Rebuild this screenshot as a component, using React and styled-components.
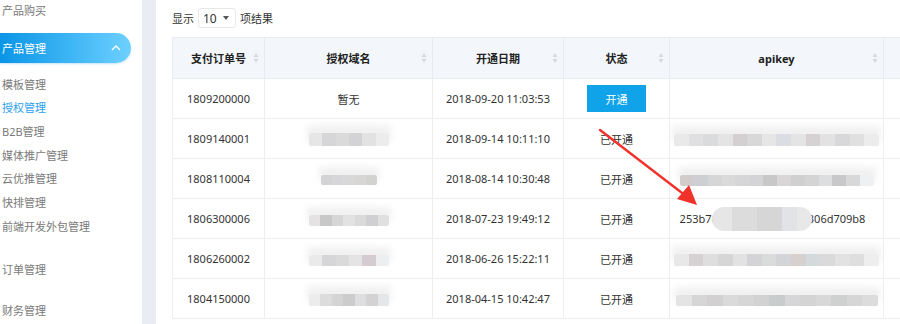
import React from 'react';
import styled, { createGlobalStyle } from 'styled-components';

const GlobalStyle = createGlobalStyle`
  html, body {
    margin: 0;
    padding: 0;
    background: #fff;
    overflow: hidden;
  }
  body {
    font-family: "Noto Sans", "Noto Sans CJK SC", sans-serif;
  }
`;

const subMenu = ['模板管理', '授权管理', 'B2B管理', '媒体推广管理', '云优推管理', '快排管理', '前端开发外包管理'];

const rows = [
  { id: '1809200000', domain: null, date: '2018-09-20 11:03:53', open: false, key: null },
  {
    id: '1809140001',
    domain: { w: 80, h: 13, shades: ['#e6e6e6', '#d6d6d8', '#dadada', '#d3d3d5', '#e2e2e2', '#ececec'] },
    date: '2018-09-14 10:11:10',
    open: true,
    key: { w: 205, h: 12, shades: ['#e9e9e9', '#e0e0e2', '#dadbdd', '#e4e4e4', '#d4d0d2', '#d8d8d8', '#e6e6e6', '#dcdde2', '#e4e4e4', '#d6d2d4', '#e2e2e2', '#d8d7d9', '#e0e0e0', '#ececec'] },
  },
  {
    id: '1808110004',
    domain: { w: 56, h: 10, shades: ['#d3d3d5', '#d6d6d8', '#d8d8d8', '#d8d6d4', '#d2d3cf'] },
    date: '2018-08-14 10:30:48',
    open: true,
    key: { w: 194, h: 11, shades: ['#d2cccd', '#cdcfd3', '#d6d6d6', '#dadada', '#d6d6d8', '#d4d4d6', '#c8c8c8', '#d8d6d6', '#d0d0d0', '#d4d4d4', '#dcdee0', '#c8c8ca', '#d8d8d8', '#eef0f2'] },
  },
  {
    id: '1806300006',
    domain: { w: 80, h: 11, shades: ['#e4e2e2', '#c8c8c8', '#d6d6d6', '#e2e2e2', '#dadada', '#d0d0d2', '#e0e0e0'] },
    date: '2018-07-23 19:49:12',
    open: true,
    key: 'split',
  },
  {
    id: '1806260002',
    domain: { w: 80, h: 11, shades: ['#eaeaea', '#d6d6d8', '#dadada', '#e4e4e4', '#d4ccd0', '#eceef0'] },
    date: '2018-06-26 15:22:11',
    open: true,
    key: { w: 205, h: 12, shades: ['#e8e8e8', '#d6d2d4', '#dedede', '#d6d6d6', '#e2e2e2', '#d4d4d6', '#dadcdc', '#d2d4d8', '#d6d0ce', '#d4dadc', '#dadada', '#e2e2e2', '#dedede', '#eeeeee'] },
  },
  {
    id: '1804150000',
    domain: { w: 80, h: 12, shades: ['#ececec', '#dcdcdc', '#d4d4d4', '#cccccc', '#dedee0', '#d4d2d2', '#e4e6e8'] },
    date: '2018-04-15 10:42:47',
    open: true,
    key: { w: 202, h: 11, shades: ['#e4e4e4', '#d6d6d6', '#d2d0d0', '#dadada', '#d6d6d6', '#d2d2d2', '#c8cccc', '#d6d6d8', '#d4d4d4', '#d8d8d8', '#cfd1d1', '#d6d6d6', '#dcdcdc'] },
  },
];

function SortIcon() {
  return (
    <StSort width="6" height="12" viewBox="0 0 6 12">
      <path d="M3 1 L5.5 5 L0.5 5 Z" fill="#d6dade" />
      <path d="M3 11 L5.5 7 L0.5 7 Z" fill="#d6dade" />
    </StSort>
  );
}

function Mosaic({ spec }) {
  return <StMosaic $w={spec.w} $h={spec.h} $shades={spec.shades} />;
}

function App() {
  return (
    <StPage>
      <GlobalStyle />
      <StSidebar>
        <StTopItem $first>产品购买</StTopItem>
        <StActiveGroup>
          产品管理
          <svg width="10" height="6" viewBox="0 0 10 6">
            <path d="M1 5 L5 1 L9 5" stroke="#fff" strokeWidth="1.3" fill="none" />
          </svg>
        </StActiveGroup>
        <StSubList>
          {subMenu.map((name) => (
            <StSubItem key={name} $active={name === '授权管理'}>
              {name}
            </StSubItem>
          ))}
        </StSubList>
        <StTopItem>订单管理</StTopItem>
        <StTopItem>财务管理</StTopItem>
      </StSidebar>
      <StGutter />
      <StMain>
        <StToolbar>
          显示
          <StSelect>
            10
            <svg width="6" height="4" viewBox="0 0 6 4">
              <path d="M0 0 L6 0 L3 4 Z" fill="#555" />
            </svg>
          </StSelect>
          项结果
        </StToolbar>
        <StTableWrap>
          <StTable>
            <colgroup>
              <col style={{ width: 92 }} />
              <col style={{ width: 168 }} />
              <col style={{ width: 131 }} />
              <col style={{ width: 106 }} />
              <col style={{ width: 214 }} />
              <col style={{ width: 160 }} />
            </colgroup>
            <thead>
              <tr>
                {['支付订单号', '授权域名', '开通日期', '状态', 'apikey', ''].map((h, i) => (
                  <StTh key={i}>
                    {h}
                    {h && <SortIcon />}
                  </StTh>
                ))}
              </tr>
            </thead>
            <tbody>
              {rows.map((r) => (
                <tr key={r.id}>
                  <StTd>{r.id}</StTd>
                  <StTd>{r.domain ? <Mosaic spec={r.domain} /> : '暂无'}</StTd>
                  <StTd>{r.date}</StTd>
                  <StTd>{r.open ? '已开通' : <StOpenButton>开通</StOpenButton>}</StTd>
                  <StTd>
                    {r.key === 'split' ? (
                      <StKeyLine>
                        253b76
                        <StBlob />
                        306d709b8
                      </StKeyLine>
                    ) : r.key ? (
                      <Mosaic spec={r.key} />
                    ) : null}
                  </StTd>
                  <StTd />
                </tr>
              ))}
            </tbody>
          </StTable>
        </StTableWrap>
      </StMain>
      <StArrow width="900" height="324" viewBox="0 0 900 324">
        <line x1="600" y1="130" x2="686" y2="196" stroke="#f1322b" strokeWidth="2.4" strokeLinecap="round" />
        <path d="M697 205 L677 199 L689 185 Z" fill="#f1322b" />
      </StArrow>
    </StPage>
  );
}

const StPage = styled.div`
  position: relative;
  display: flex;
  width: 900px;
  height: 324px;
  overflow: hidden;
  background: #fff;
`;

const StSidebar = styled.div`
  width: 142px;
  flex-shrink: 0;
  background: #fff;
  font-size: 11px;
  color: #7a7a7a;
`;

const StTopItem = styled.div`
  height: ${(p) => (p.$first ? '19px' : '40px')};
  margin-top: ${(p) => (p.$first ? '0' : '11px')};
  margin-bottom: ${(p) => (p.$first ? '0' : '-10px')};
  padding-left: 2px;
  display: flex;
  align-items: center;
`;

const StActiveGroup = styled.div`
  margin-top: 14px;
  width: 131px;
  height: 30px;
  box-sizing: border-box;
  padding: 0 10px 0 2px;
  display: flex;
  align-items: center;
  justify-content: space-between;
  color: #fff;
  font-size: 11px;
  border-radius: 0 15px 15px 0;
  background: linear-gradient(to right, #0b95e6, #3fb6f5 55%, #6ed0ff);
  box-shadow: 0 1px 2px rgba(30, 140, 220, 0.25);
`;

const StSubList = styled.div`
  padding-top: 9px;
`;

const StSubItem = styled.div`
  height: 23.67px;
  padding-left: 2px;
  display: flex;
  align-items: center;
  color: ${(p) => (p.$active ? '#2b9ff0' : '#7a7a7a')};
`;

const StGutter = styled.div`
  width: 14px;
  flex-shrink: 0;
  background: #e9edf3;
`;

const StMain = styled.div`
  flex: 1;
  min-width: 0;
  padding-left: 16px;
  font-size: 11px;
  color: #333;
`;

const StToolbar = styled.div`
  height: 36px;
  margin-bottom: 1px;
  display: flex;
  align-items: center;
  gap: 4px;
  color: #333;
`;

const StSelect = styled.div`
  width: 38px;
  height: 20px;
  box-sizing: border-box;
  border: 1px solid #e6e8eb;
  border-radius: 3px;
  padding: 0 6px 0 4px;
  display: flex;
  align-items: center;
  justify-content: space-between;
  font-size: 12px;
  color: #333;
`;

const StTableWrap = styled.div`
  overflow: hidden;
`;

const StTable = styled.table`
  table-layout: fixed;
  width: 871px;
  border-collapse: collapse;
`;

const StTh = styled.th`
  position: relative;
  height: 40px;
  padding: 0;
  background: #f3f7fb;
  border: 1px solid #e8ecf0;
  font-size: 11px;
  font-weight: bold;
  color: #222;
  text-align: center;
`;

const StSort = styled.svg`
  position: absolute;
  right: 5px;
  top: 14px;
`;

const StTd = styled.td`
  height: 39px;
  padding: 0;
  border: 1px solid #eceef1;
  text-align: center;
  color: #333;
  font-size: 11px;
  white-space: nowrap;
`;

const StOpenButton = styled.button`
  width: 59px;
  height: 27px;
  border: none;
  background: #10a3ea;
  color: #fff;
  font-family: inherit;
  font-size: 11px;
  padding: 0;
  cursor: pointer;
`;

const StMosaic = styled.div`
  display: inline-block;
  vertical-align: middle;
  width: ${(p) => p.$w}px;
  height: ${(p) => p.$h}px;
  background: ${(p) => {
    const n = p.$shades.length;
    const stops = p.$shades.map((c, i) => `${c} ${(i * 100) / n}% ${((i + 1) * 100) / n}%`);
    return `linear-gradient(to right, ${stops.join(', ')})`;
  }};
  box-shadow: 0 -6px 6px 2px rgba(240, 240, 240, 0.9);
  border-radius: 2px;
  filter: blur(0.4px);
`;

const StKeyLine = styled.span`
  display: inline-flex;
  align-items: center;
  margin-left: -8px;
`;

const StBlob = styled.span`
  display: inline-block;
  width: 100px;
  height: 24px;
  margin: 0 -4px 0 -6px;
  border-radius: 12px;
  background: linear-gradient(
    to right,
    #e6e6e6 0 20%,
    #dcdcdc 20% 45%,
    #d6d6d6 45% 70%,
    #e2e3e6 70% 85%,
    #e8e8e8 85% 100%
  );
  filter: blur(0.6px);
`;

const StArrow = styled.svg`
  position: absolute;
  left: 0;
  top: 0;
  pointer-events: none;
`;

export default App;
